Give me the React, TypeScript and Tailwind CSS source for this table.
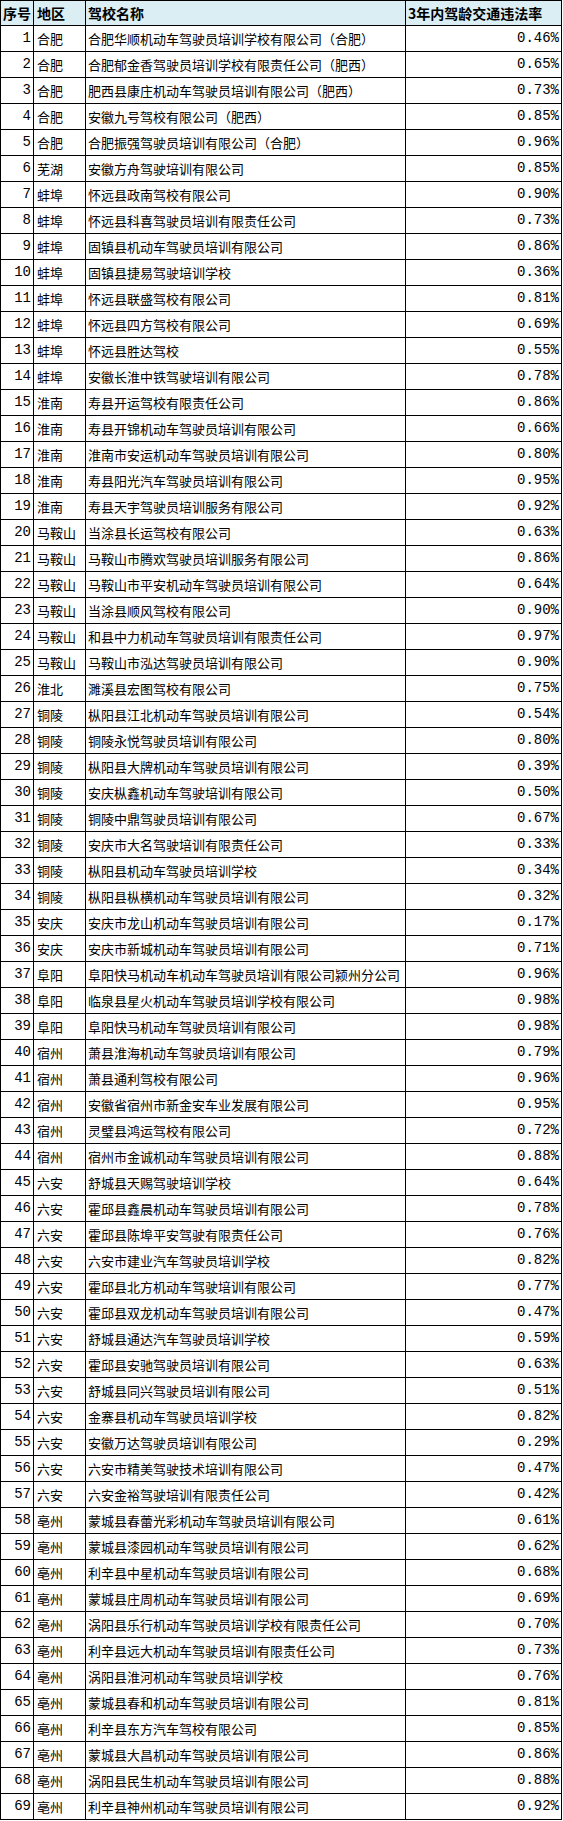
const rows: [string, string, string][] = [
  ["合肥", "合肥华顺机动车驾驶员培训学校有限公司（合肥）", "0.46%"],
  ["合肥", "合肥郁金香驾驶员培训学校有限责任公司（肥西）", "0.65%"],
  ["合肥", "肥西县康庄机动车驾驶员培训有限公司（肥西）", "0.73%"],
  ["合肥", "安徽九号驾校有限公司（肥西）", "0.85%"],
  ["合肥", "合肥振强驾驶员培训有限公司（合肥）", "0.96%"],
  ["芜湖", "安徽方舟驾驶培训有限公司", "0.85%"],
  ["蚌埠", "怀远县政南驾校有限公司", "0.90%"],
  ["蚌埠", "怀远县科喜驾驶员培训有限责任公司", "0.73%"],
  ["蚌埠", "固镇县机动车驾驶员培训有限公司", "0.86%"],
  ["蚌埠", "固镇县捷易驾驶培训学校", "0.36%"],
  ["蚌埠", "怀远县联盛驾校有限公司", "0.81%"],
  ["蚌埠", "怀远县四方驾校有限公司", "0.69%"],
  ["蚌埠", "怀远县胜达驾校", "0.55%"],
  ["蚌埠", "安徽长淮中铁驾驶培训有限公司", "0.78%"],
  ["淮南", "寿县开运驾校有限责任公司", "0.86%"],
  ["淮南", "寿县开锦机动车驾驶员培训有限公司", "0.66%"],
  ["淮南", "淮南市安运机动车驾驶员培训有限公司", "0.80%"],
  ["淮南", "寿县阳光汽车驾驶员培训有限公司", "0.95%"],
  ["淮南", "寿县天宇驾驶员培训服务有限公司", "0.92%"],
  ["马鞍山", "当涂县长运驾校有限公司", "0.63%"],
  ["马鞍山", "马鞍山市腾欢驾驶员培训服务有限公司", "0.86%"],
  ["马鞍山", "马鞍山市平安机动车驾驶员培训有限公司", "0.64%"],
  ["马鞍山", "当涂县顺风驾校有限公司", "0.90%"],
  ["马鞍山", "和县中力机动车驾驶员培训有限责任公司", "0.97%"],
  ["马鞍山", "马鞍山市泓达驾驶员培训有限公司", "0.90%"],
  ["淮北", "濉溪县宏图驾校有限公司", "0.75%"],
  ["铜陵", "枞阳县江北机动车驾驶员培训有限公司", "0.54%"],
  ["铜陵", "铜陵永悦驾驶员培训有限公司", "0.80%"],
  ["铜陵", "枞阳县大牌机动车驾驶员培训有限公司", "0.39%"],
  ["铜陵", "安庆枞鑫机动车驾驶培训有限公司", "0.50%"],
  ["铜陵", "铜陵中鼎驾驶员培训有限公司", "0.67%"],
  ["铜陵", "安庆市大名驾驶培训有限责任公司", "0.33%"],
  ["铜陵", "枞阳县机动车驾驶员培训学校", "0.34%"],
  ["铜陵", "枞阳县枞横机动车驾驶员培训有限公司", "0.32%"],
  ["安庆", "安庆市龙山机动车驾驶员培训有限公司", "0.17%"],
  ["安庆", "安庆市新城机动车驾驶员培训有限公司", "0.71%"],
  ["阜阳", "阜阳快马机动车机动车驾驶员培训有限公司颍州分公司", "0.96%"],
  ["阜阳", "临泉县星火机动车驾驶员培训学校有限公司", "0.98%"],
  ["阜阳", "阜阳快马机动车驾驶员培训有限公司", "0.98%"],
  ["宿州", "萧县淮海机动车驾驶员培训有限公司", "0.79%"],
  ["宿州", "萧县通利驾校有限公司", "0.96%"],
  ["宿州", "安徽省宿州市新金安车业发展有限公司", "0.95%"],
  ["宿州", "灵璧县鸿运驾校有限公司", "0.72%"],
  ["宿州", "宿州市金诚机动车驾驶员培训有限公司", "0.88%"],
  ["六安", "舒城县天赐驾驶培训学校", "0.64%"],
  ["六安", "霍邱县鑫晨机动车驾驶员培训有限公司", "0.78%"],
  ["六安", "霍邱县陈埠平安驾驶有限责任公司", "0.76%"],
  ["六安", "六安市建业汽车驾驶员培训学校", "0.82%"],
  ["六安", "霍邱县北方机动车驾驶培训有限公司", "0.77%"],
  ["六安", "霍邱县双龙机动车驾驶员培训有限公司", "0.47%"],
  ["六安", "舒城县通达汽车驾驶员培训学校", "0.59%"],
  ["六安", "霍邱县安驰驾驶员培训有限公司", "0.63%"],
  ["六安", "舒城县同兴驾驶员培训有限公司", "0.51%"],
  ["六安", "金寨县机动车驾驶员培训学校", "0.82%"],
  ["六安", "安徽万达驾驶员培训有限公司", "0.29%"],
  ["六安", "六安市精美驾驶技术培训有限公司", "0.47%"],
  ["六安", "六安金裕驾驶培训有限责任公司", "0.42%"],
  ["亳州", "蒙城县春蕾光彩机动车驾驶员培训有限公司", "0.61%"],
  ["亳州", "蒙城县漆园机动车驾驶员培训有限公司", "0.62%"],
  ["亳州", "利辛县中星机动车驾驶员培训有限公司", "0.68%"],
  ["亳州", "蒙城县庄周机动车驾驶员培训有限公司", "0.69%"],
  ["亳州", "涡阳县乐行机动车驾驶员培训学校有限责任公司", "0.70%"],
  ["亳州", "利辛县远大机动车驾驶员培训有限责任公司", "0.73%"],
  ["亳州", "涡阳县淮河机动车驾驶员培训学校", "0.76%"],
  ["亳州", "蒙城县春和机动车驾驶员培训有限公司", "0.81%"],
  ["亳州", "利辛县东方汽车驾校有限公司", "0.85%"],
  ["亳州", "蒙城县大昌机动车驾驶员培训有限公司", "0.86%"],
  ["亳州", "涡阳县民生机动车驾驶员培训有限公司", "0.88%"],
  ["亳州", "利辛县神州机动车驾驶员培训有限公司", "0.92%"],
];

const cjk = "font-['Noto_Sans_CJK_SC',sans-serif]";
const mono = "font-['Liberation_Mono',monospace]";
const grid = "grid grid-cols-[33px_52px_320px_156px] border-b border-black";
const cell = "flex items-center border-r border-black overflow-hidden whitespace-nowrap";

export default function App() {
  return (
    <div className="w-[563px] bg-white text-black">
      <div className="w-[562px] border-l border-t border-black">
        <div className={`${grid} h-[25px] bg-[#daeef3] text-[14px] font-bold ${cjk}`}>
          <div className={`${cell} pl-[2px]`}>序号</div>
          <div className={`${cell} pl-[3px]`}>地区</div>
          <div className={`${cell} pl-[2px]`}>驾校名称</div>
          <div className={`${cell} pl-[2px]`}>3年内驾龄交通违法率</div>
        </div>
        {rows.map(([area, name, rate], i) => (
          <div key={i} className={`${grid} h-[26px]`}>
            <div className={`${cell} justify-end pr-[2px] text-[14px] ${mono}`}>{i + 1}</div>
            <div className={`${cell} pl-[3px] text-[13px] ${cjk}`}>{area}</div>
            <div className={`${cell} pl-[2px] text-[13px] ${cjk}`}>{name}</div>
            <div className={`${cell} justify-end pr-[2px] text-[14px] ${mono}`}>{rate}</div>
          </div>
        ))}
      </div>
    </div>
  );
}
